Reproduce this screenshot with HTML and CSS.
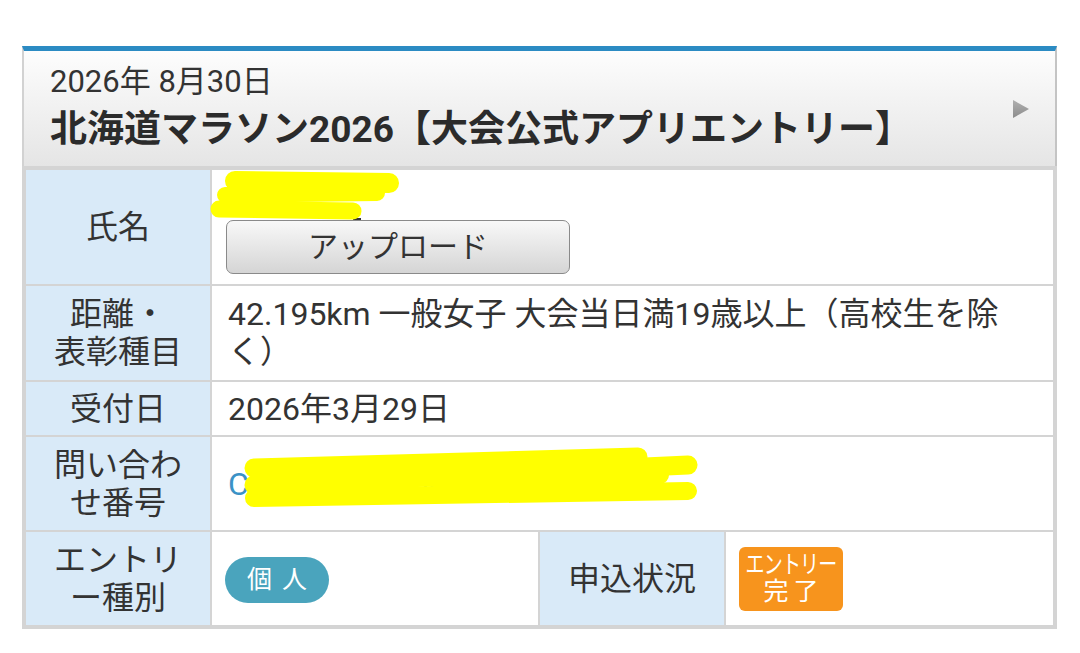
FILE: index.html
```html
<!DOCTYPE html>
<html lang="ja">
<head>
<meta charset="utf-8">
<title>エントリー</title>
<link rel="stylesheet" href="styles.css">
</head>
<body>
<div class="card">
  <div class="head">
    <div class="head-text">
      <div class="date">2026年 8月30日</div>
      <div class="title">北海道マラソン2026【大会公式アプリエントリー】</div>
    </div>
    <svg class="arrow" width="18" height="20" viewBox="0 0 18 20">
      <defs>
        <linearGradient id="ag" x1="0" y1="0" x2="0" y2="1">
          <stop offset="0" stop-color="#b0b0b0"/>
          <stop offset="1" stop-color="#8c8c8c"/>
        </linearGradient>
      </defs>
      <path d="M1 1 L17 10 L1 19 Z" fill="url(#ag)"/>
    </svg>
  </div>
  <div class="grid">
    <div class="lab">氏名</div>
    <div class="val span3 name-cell">
      <div class="name-line">
        <svg class="redact-name" width="200" height="60" viewBox="0 0 200 60">
          <path d="M25 35 L40 35" stroke="#333" stroke-width="2"/>
          <path d="M148 51 L156 51" stroke="#333" stroke-width="2"/>
          <g stroke="#ffff00" stroke-linecap="round" fill="none">
            <path d="M30 13 L184 15" stroke-width="20"/>
            <path d="M20 27 L172 25" stroke-width="16"/>
            <path d="M14 41 L148 43" stroke-width="17"/>
          </g>
        </svg>
      </div>
      <button class="upload">アップロード</button>
    </div>

    <div class="lab">距離・<br>表彰種目</div>
    <div class="val span3 text">42.195km 一般女子 大会当日満19歳以上（高校生を除く）</div>

    <div class="lab">受付日</div>
    <div class="val span3 text">2026年3月29日</div>

    <div class="lab">問い合わ<br>せ番号</div>
    <div class="val span3 text inquiry">
      <span class="link">C000000000000（0000）</span>
      <svg class="redact-inq" width="470" height="70" viewBox="0 0 470 70">
        <g stroke="#ffff00" stroke-linecap="round" fill="none">
          <path d="M14 23 L398 12" stroke-width="19"/>
          <path d="M14 40 L448 20" stroke-width="19"/>
          <path d="M14 53 L448 46" stroke-width="18"/>
          <path d="M200 33 L420 30" stroke-width="18"/>
        </g>
      </svg>
    </div>

    <div class="lab">エントリ<br>ー種別</div>
    <div class="val text">
      <span class="pill">個人</span>
    </div>
    <div class="lab">申込状況</div>
    <div class="val text">
      <span class="done"><span class="l1">エントリー</span><span class="l2">完了</span></span>
    </div>
  </div>
</div>
</body>
</html>
```

FILE: styles.css
```css
html, body {
  margin: 0;
  padding: 0;
  background: #ffffff;
}
body {
  font-family: "Roboto", "Noto Sans CJK JP", sans-serif;
  color: #333333;
}
.card {
  width: 1035px;
  margin: 46px 0 0 22px;
}
.head {
  box-sizing: border-box;
  height: 120px;
  border-top: 5px solid #2b8bc3;
  border-left: 2px solid #d2d2d2;
  border-right: 2px solid #c4c4c4;
  background: linear-gradient(#fdfdfd, #e5e5e5);
  padding: 12px 25px 13px 26px;
  display: flex;
  align-items: center;
}
.head-text {
  flex: 1;
}
.date {
  font-size: 31px;
  line-height: 38px;
  color: #333;
}
.title {
  margin-top: 6px;
  font-size: 37px;
  line-height: 46px;
  font-weight: bold;
  color: #2b2b2b;
  white-space: nowrap;
}
.arrow {
  display: block;
  margin-top: 2px;
}
.grid {
  display: grid;
  grid-template-columns: 184px 326px 184px 1fr;
  grid-template-rows: 114px 94px 53px 93px 93px;
  gap: 2px;
  padding: 4px;
  background: #d4d4d4;
}
.lab {
  background: #d9eaf8;
  font-size: 32px;
  line-height: 38px;
  text-align: center;
  display: flex;
  align-items: center;
  justify-content: center;
  color: #333;
}
.val {
  background: #ffffff;
  display: flex;
  align-items: center;
  padding-left: 16px;
  min-width: 0;
}
.span3 {
  grid-column: 2 / 5;
}
.text {
  font-size: 32px;
  line-height: 38px;
  padding-right: 14px;
}
.name-cell {
  flex-direction: column;
  align-items: flex-start;
  justify-content: flex-start;
  padding: 2px 0 0 14px;
}
.name-line {
  position: relative;
  height: 48px;
  width: 100%;
}
.redact-name {
  position: absolute;
  left: -21px;
  top: -4px;
}
.upload {
  box-sizing: border-box;
  width: 344px;
  height: 54px;
  border: 1px solid #8a8a8a;
  border-radius: 7px;
  background: linear-gradient(#f8f8f8, #d5d5d5);
  font-family: "Roboto", "Noto Sans CJK JP", sans-serif;
  font-size: 30px;
  color: #333;
  padding: 0;
  line-height: 50px;
}
.inquiry {
  position: relative;
}
.link {
  color: #3b92c6;
  white-space: nowrap;
}
.redact-inq {
  position: absolute;
  left: 28px;
  top: 8px;
}
.pill {
  display: inline-block;
  width: 104px;
  height: 46px;
  border-radius: 23px;
  background: #4aa4bd;
  color: #ffffff;
  font-size: 25px;
  line-height: 46px;
  letter-spacing: 10px;
  text-indent: 10px;
  text-align: center;
  margin-left: -3px;
  margin-top: 2px;
}
.done {
  display: inline-flex;
  flex-direction: column;
  align-items: center;
  box-sizing: border-box;
  width: 104px;
  height: 64px;
  border-radius: 6px;
  background: #f7941d;
  color: #ffffff;
  font-size: 25px;
  line-height: 27px;
  padding-top: 4px;
  margin-left: -3px;
}
.l1 {
  display: block;
  white-space: nowrap;
  letter-spacing: -1px;
  transform: scaleX(0.76);
}
.l2 {
  display: block;
  letter-spacing: 5px;
  text-indent: 5px;
}
```
